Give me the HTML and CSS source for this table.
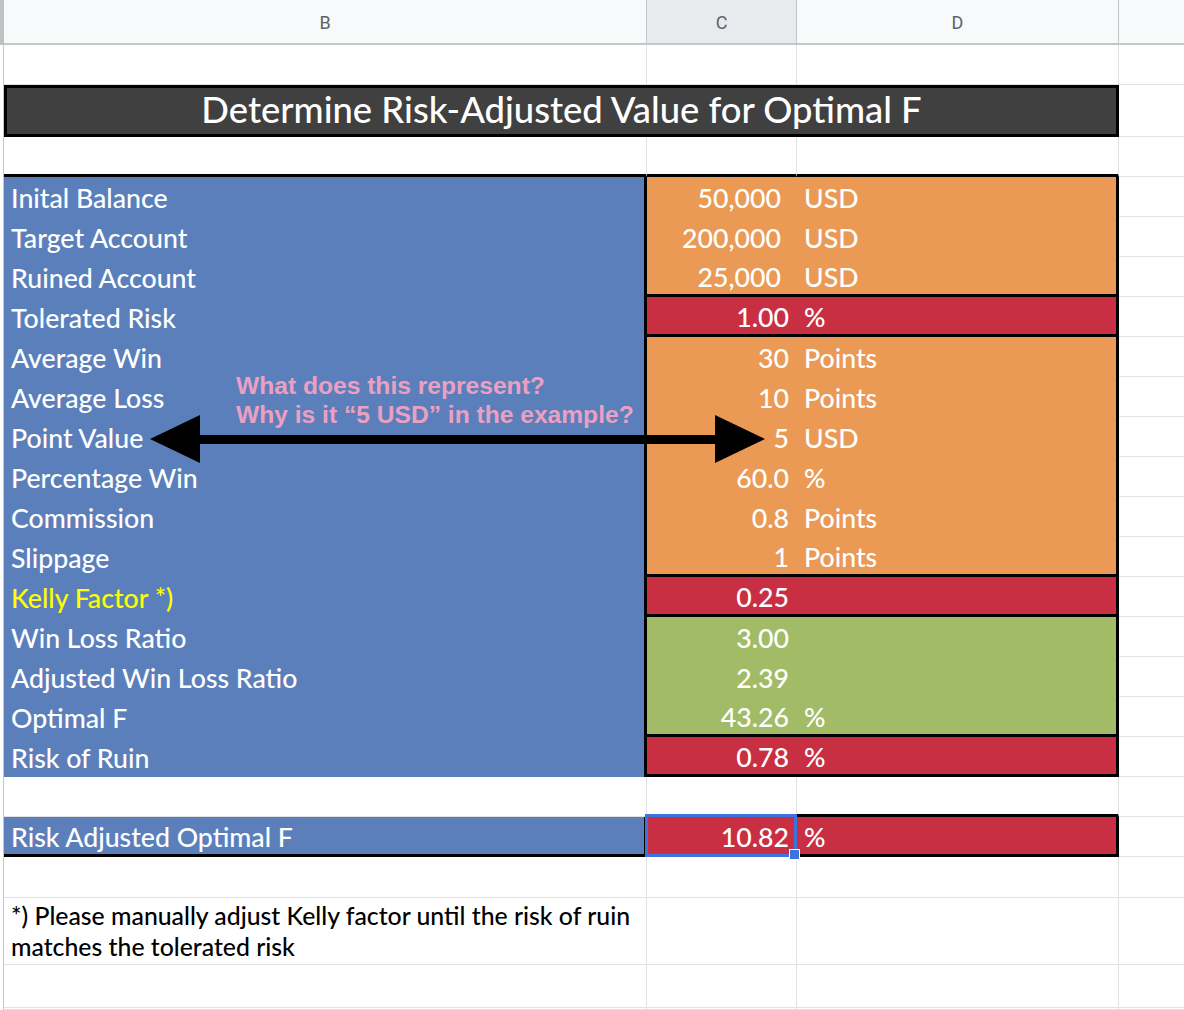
FILE: index.html
```html
<!DOCTYPE html>
<html lang="en">
<head>
<meta charset="utf-8">
<title>Optimal F</title>
<link rel="stylesheet" href="styles.css">
</head>
<body>
<div class="sheet">
  <!-- column header -->
  <div class="stub stub-h"></div>
  <div class="ch">B</div>
  <div class="ch ch-sel">C</div>
  <div class="ch">D</div>
  <div class="ch ch-e"></div>

  <!-- row 1 -->
  <div class="stub"></div><div class="c"></div><div class="c"></div><div class="c"></div><div class="c e"></div>

  <!-- title -->
  <div class="stub"></div>
  <div class="title">Determine Risk-Adjusted Value for Optimal F</div>
  <div class="c e"></div>

  <!-- row 3 -->
  <div class="stub"></div><div class="c bb"></div><div class="c bb"></div><div class="c bb"></div><div class="c e"></div>

  <!-- data -->
  <div class="stub"></div><div class="lab">Inital Balance</div><div class="val orange pad2">50,000</div><div class="unit orange">USD</div><div class="c e"></div>
  <div class="stub"></div><div class="lab">Target Account</div><div class="val orange pad2">200,000</div><div class="unit orange">USD</div><div class="c e"></div>
  <div class="stub"></div><div class="lab">Ruined Account</div><div class="val orange pad2 end">25,000</div><div class="unit orange end">USD</div><div class="c e"></div>
  <div class="stub"></div><div class="lab">Tolerated Risk</div><div class="val red end">1.00</div><div class="unit red end">%</div><div class="c e"></div>
  <div class="stub"></div><div class="lab">Average Win</div><div class="val orange">30</div><div class="unit orange">Points</div><div class="c e"></div>
  <div class="stub"></div><div class="lab">Average Loss</div><div class="val orange">10</div><div class="unit orange">Points</div><div class="c e"></div>
  <div class="stub"></div><div class="lab">Point Value</div><div class="val orange">5</div><div class="unit orange">USD</div><div class="c e"></div>
  <div class="stub"></div><div class="lab">Percentage Win</div><div class="val orange">60.0</div><div class="unit orange">%</div><div class="c e"></div>
  <div class="stub"></div><div class="lab">Commission</div><div class="val orange">0.8</div><div class="unit orange">Points</div><div class="c e"></div>
  <div class="stub"></div><div class="lab">Slippage</div><div class="val orange end">1</div><div class="unit orange end">Points</div><div class="c e"></div>
  <div class="stub"></div><div class="lab yellow">Kelly Factor *)</div><div class="val red end">0.25</div><div class="unit red end"></div><div class="c e"></div>
  <div class="stub"></div><div class="lab">Win Loss Ratio</div><div class="val green">3.00</div><div class="unit green"></div><div class="c e"></div>
  <div class="stub"></div><div class="lab">Adjusted Win Loss Ratio</div><div class="val green">2.39</div><div class="unit green"></div><div class="c e"></div>
  <div class="stub"></div><div class="lab">Optimal F</div><div class="val green end">43.26</div><div class="unit green end">%</div><div class="c e"></div>
  <div class="stub"></div><div class="lab">Risk of Ruin</div><div class="val red end">0.78</div><div class="unit red end">%</div><div class="c e"></div>

  <!-- blank -->
  <div class="stub"></div><div class="c"></div><div class="c bb"></div><div class="c bb"></div><div class="c e"></div>

  <!-- result -->
  <div class="stub"></div>
  <div class="lab lab-end">Risk Adjusted Optimal F</div>
  <div class="val red end selected">10.82<span class="sel"></span><span class="handle"></span></div>
  <div class="unit red end">%</div>
  <div class="c e"></div>

  <!-- blank -->
  <div class="stub"></div><div class="c"></div><div class="c"></div><div class="c"></div><div class="c e"></div>

  <!-- note -->
  <div class="stub"></div>
  <div class="c note">*) Please manually adjust Kelly factor until the risk of ruin matches the tolerated risk</div>
  <div class="c"></div><div class="c"></div><div class="c e"></div>

  <!-- trailing rows -->
  <div class="stub"></div><div class="c"></div><div class="c"></div><div class="c"></div><div class="c e"></div>
  <div class="stub"></div><div class="c"></div><div class="c"></div><div class="c"></div><div class="c e"></div>

  <!-- annotation overlay -->
  <div class="callout">What does this represent?<br>Why is it “5 USD” in the example?</div>
  <svg class="arrow" width="615" height="50" viewBox="0 0 615 50" aria-hidden="true">
    <polygon points="0,25 50,1 50,49" fill="#000"/>
    <rect x="49" y="21" width="517" height="9" fill="#000"/>
    <polygon points="615,25 565,1 565,49" fill="#000"/>
  </svg>
</div>
</body>
</html>
```

FILE: styles.css
```css
* { box-sizing: border-box; }

html, body {
  margin: 0;
  padding: 0;
  background: #ffffff;
}

.sheet {
  position: relative;
  width: 1184px;
  height: 1010px;
  overflow: hidden;
  display: grid;
  grid-template-columns: 4px 643px 150px 322px 65px;
  grid-template-rows: 45px 40px 52px 40px repeat(15, 40px) 40px 40px 41px 67px 43px 2px;
  font-family: "Lato", "Liberation Sans", sans-serif;
  font-weight: 500;
  font-size: 26.7px;
}

.stub {
  background: #ffffff;
  border-right: 1px solid #c4c7c5;
}

.stub-h {
  background: #bfc1c3;
  border-right: none;
}

.ch {
  background: #f8f9fa;
  border-right: 1px solid #c4c7c5;
  border-bottom: 2px solid #c4c7c5;
  display: flex;
  align-items: center;
  justify-content: center;
  font-family: "Roboto", "Liberation Sans", sans-serif;
  font-weight: 400;
  font-size: 18px;
  color: #5f6368;
  padding-top: 1px;
}

.ch-sel { background: #e8eaed; }
.ch-e { border-right: none; }

.c {
  border-right: 1px solid #e2e2e2;
  border-bottom: 1px solid #e2e2e2;
}

.c.e { border-right: none; }

.c.bb { border-bottom: 3px solid #000; }

.title {
  grid-column: 2 / 5;
  background: #404040;
  border: 3px solid #000;
  color: #ffffff;
  font-size: 36.4px;
  display: flex;
  align-items: center;
  justify-content: center;
  padding-bottom: 5px;
}

.lab {
  background: #5b7fbb;
  border-right: 3px solid #000;
  color: #ffffff;
  display: flex;
  align-items: center;
  padding-left: 7px;
  padding-top: 2px;
  white-space: nowrap;
}

.lab-end { border-bottom: 3px solid #000; }

.yellow { color: #ffff00; }

.val, .unit {
  color: #ffffff;
  display: flex;
  align-items: center;
  padding-top: 2px;
  white-space: nowrap;
}

.val {
  justify-content: flex-end;
  padding-right: 8px;
}

.val.pad2 { padding-right: 16px; }

.unit {
  padding-left: 7px;
  border-right: 3px solid #000;
}

.end { border-bottom: 3px solid #000; }

.orange { background: #ea9a55; }
.red { background: #c92f43; }
.green { background: #a2bb66; }

.selected { position: relative; }

.sel {
  position: absolute;
  left: -2px;
  right: 0;
  top: -3px;
  bottom: -3px;
  border: 3px solid #3d74dc;
}

.handle {
  position: absolute;
  left: 142px;
  top: 32px;
  width: 11px;
  height: 11px;
  background: #3d74dc;
  border: 1px solid #ffffff;
}

.note {
  font-size: 24.8px;
  line-height: 31px;
  color: #000;
  padding: 4px 8px 2px 7px;
  display: flex;
  align-items: flex-end;
}

.callout {
  position: absolute;
  left: 236px;
  top: 371px;
  font-family: "Liberation Sans", "Arial", sans-serif;
  font-weight: bold;
  font-size: 24.6px;
  line-height: 29px;
  color: #eba0c2;
  white-space: nowrap;
}

.arrow {
  position: absolute;
  left: 150px;
  top: 414px;
}
```
